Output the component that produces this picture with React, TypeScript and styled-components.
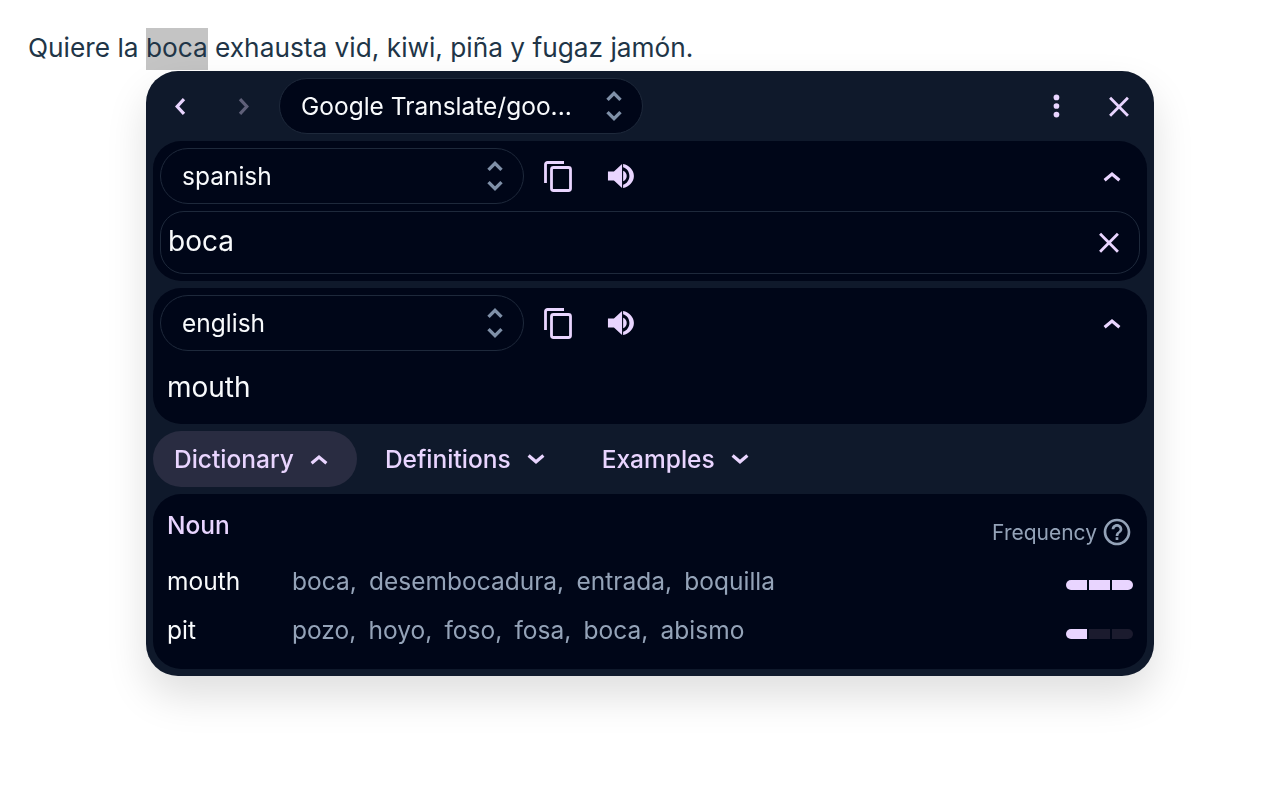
import * as React from 'react'
import { FC } from 'react'
import styled, { createGlobalStyle } from 'styled-components'

const GlobalStyle = createGlobalStyle`
    html, body {
        margin: 0;
        padding: 0;
        background: #fff;
        font-family: Inter, "Liberation Sans", sans-serif;
    }
`

const lavender = '#e9d5ff'
const muted = '#94a3b8'
const ink = '#f8fafc'
const panelBg = '#000618'

const Page = styled.div`
    position: relative;
    width: 1280px;
    height: 800px;
    overflow: hidden;
    padding: 28px 0 0 28px;
    box-sizing: border-box;
`

const Sentence = styled.p`
    margin: 0;
    font-size: 26.25px;
    line-height: 40px;
    color: #213547;

    mark {
        display: inline-block;
        padding-bottom: 2px;
        background: #c4c4c4;
        color: inherit;
    }
`

const Popup = styled.div`
    position: absolute;
    left: 146px;
    top: 71px;
    width: 1008px;
    height: 605px;
    box-sizing: border-box;
    padding: 0 7px 7px;
    background: #0f192b;
    border-radius: 32px;
    box-shadow: 0 20px 40px rgba(0, 0, 0, 0.13);
    will-change: transform;
    display: flex;
    flex-direction: column;
    gap: 7px;
`

const TopBar = styled.div`
    height: 63px;
    padding-top: 7px;
    margin-bottom: -7px;
    display: flex;
    align-items: flex-start;
`

const Spacer = styled.div`
    flex: 1;
`

const IconButton = styled.button<{ $gap?: number }>`
    width: 56px;
    height: 56px;
    flex: none;
    padding: 0;
    margin-right: ${p => p.$gap ?? 0}px;
    border: 0;
    background: transparent;
    color: ${lavender};
    display: flex;
    align-items: center;
    justify-content: center;
`

const Select = styled.div<{ $gap?: number }>`
    width: 364px;
    height: 56px;
    flex: none;
    box-sizing: border-box;
    padding: 0 16px 0 21px;
    margin-right: ${p => p.$gap ?? 0}px;
    border: 1px solid #1e293b;
    border-radius: 28px;
    background: ${panelBg};
    color: ${ink};
    font-size: 24.5px;
    display: flex;
    align-items: center;
    justify-content: space-between;
`

const SelectArrows = styled.span`
    color: #7f90a8;
    display: flex;
`

const Panel = styled.section`
    background: ${panelBg};
    border-radius: 28px;
`

const LangPanel = styled(Panel)`
    padding: 7px;
`

const LangRow = styled.div`
    display: flex;
    align-items: center;
`

const InputBox = styled.div`
    height: 63px;
    margin-top: 7px;
    box-sizing: border-box;
    padding: 0 13.5px 3px 7px;
    border: 1px solid #1e293b;
    border-radius: 24px;
    display: flex;
    align-items: center;
    justify-content: space-between;
    color: ${ink};
    font-size: 28px;
`

const OutputText = styled.div`
    height: 61px;
    padding: 5px 0 0 7px;
    display: flex;
    align-items: center;
    color: ${ink};
    font-size: 28px;
`

const ClearButton = styled.span`
    color: ${lavender};
    display: flex;
    margin-bottom: -1px;
`

const Tabs = styled.div`
    display: flex;
    height: 56px;
    gap: 7px;
`

const Tab = styled.div<{ $open?: boolean }>`
    height: 56px;
    box-sizing: border-box;
    padding: 0 23.5px 0 21px;
    border-radius: 28px;
    background: ${p => (p.$open ? '#292c41' : 'transparent')};
    color: ${lavender};
    font-size: 24.5px;
    font-weight: 500;
    display: flex;
    align-items: center;
    gap: 11.5px;
`

const DictPanel = styled(Panel)`
    flex: 1;
    padding: 0 14px;
`

const DictHead = styled.div`
    display: flex;
    justify-content: space-between;
    height: 62px;
`

const Noun = styled.div`
    color: ${lavender};
    font-size: 24.5px;
    font-weight: 500;
    line-height: 62px;
`

const FrequencyLabel = styled.div`
    display: flex;
    align-items: center;
    gap: 4px;
    height: 76px;
    color: ${muted};
    font-size: 21px;
`

const DictRow = styled.div`
    display: flex;
    align-items: center;
    height: 49px;
`

const Word = styled.div`
    width: 125px;
    color: ${ink};
    font-size: 24.5px;
`

const Translations = styled.div`
    flex: 1;
    display: flex;
    gap: 12.25px;
    color: ${muted};
    font-size: 24.5px;
`

const Meter = styled.div`
    display: flex;
    gap: 2px;
    margin-top: 8px;
`

const MeterCell = styled.div<{ $on: boolean }>`
    width: 21px;
    height: 10px;
    background: ${p => (p.$on ? lavender : '#1b1b2e')};

    &:first-child {
        border-radius: 5px 0 0 5px;
    }

    &:last-child {
        border-radius: 0 5px 5px 0;
    }
`

const chevrons = {
    up: '6.6,18.2 14,12 21.4,18.2',
    down: '6.6,10.6 14,16.8 21.4,10.6',
    left: '17,7.2 10.2,14.5 17,21.8',
    right: '11,7.2 17.8,14.5 11,21.8',
}

const Chevron: FC<{ dir: keyof typeof chevrons; color?: string }> = ({ dir, color = 'currentColor' }) => (
    <svg width="28" height="28" viewBox="0 0 28 28" fill="none" stroke={color} strokeWidth="3.2">
        <polyline points={chevrons[dir]} />
    </svg>
)

const UpDown: FC = () => (
    <SelectArrows>
        <svg width="24" height="36" viewBox="0 0 24 36" fill="none" stroke="currentColor" strokeWidth="3.4">
            <polyline points="5.5,11.9 12,5.4 18.5,11.9" />
            <polyline points="5.5,24.1 12,30.6 18.5,24.1" />
        </svg>
    </SelectArrows>
)

const Close: FC = () => (
    <svg width="34" height="34" viewBox="0 -0.5 24 24" fill="currentColor">
        <path d="M19 6.41 17.59 5 12 10.59 6.41 5 5 6.41 10.59 12 5 17.59 6.41 19 12 13.41 17.59 19 19 17.59 13.41 12z" />
    </svg>
)

const CopyIcon: FC = () => (
    <svg width="36" height="36" viewBox="0 0 36 36" fill="none" stroke="currentColor" strokeWidth="2.8">
        <path d="M5.5 25V6.5a2 2 0 0 1 2-2H24" />
        <rect x="11.5" y="9.5" width="19" height="23" rx="2" />
    </svg>
)

const SpeakerIcon: FC = () => (
    <svg width="36" height="36" viewBox="0 0 24 24" fill="currentColor">
        <path d="M3.3 9v6h4l5.4 5V4L7.3 9z" />
        <path d="M13.4 8.5v7c1.4-.4 2.4-1.9 2.4-3.5s-1-3.1-2.4-3.5z" />
        <path d="M13.4 4v2.2c2.4.6 4.2 3 4.2 5.8s-1.8 5.2-4.2 5.8V20c4-.8 7.2-4 7.2-8s-3.2-7.2-7.2-8z" />
    </svg>
)

const MoreIcon: FC = () => (
    <svg width="36" height="36" viewBox="0 0 24 24" fill="currentColor">
        <circle cx="12.3" cy="6.3" r="1.9" />
        <circle cx="12.3" cy="12" r="1.9" />
        <circle cx="12.3" cy="17.7" r="1.9" />
    </svg>
)

const HelpIcon: FC = () => (
    <svg width="32" height="32" viewBox="0 0 24 24" fill="currentColor">
        <path d="M11 18h2v-2h-2v2zm1-16C6.48 2 2 6.48 2 12s4.48 10 10 10 10-4.48 10-10S17.52 2 12 2zm0 18c-4.41 0-8-3.59-8-8s3.59-8 8-8 8 3.59 8 8-3.59 8-8 8zm0-14c-2.21 0-4 1.79-4 4h2c0-1.1.9-2 2-2s2 .9 2 2c0 2-3 1.75-3 5h2c0-2.25 3-2.5 3-5 0-2.21-1.79-4-4-4z" />
    </svg>
)

const LanguageBlock: FC<{ lang: string; children: React.ReactNode }> = ({ lang, children }) => (
    <LangPanel>
        <LangRow>
            <Select $gap={6}>
                {lang}
                <UpDown />
            </Select>
            <IconButton $gap={7}><CopyIcon /></IconButton>
            <IconButton><SpeakerIcon /></IconButton>
            <Spacer />
            <IconButton><Chevron dir="up" /></IconButton>
        </LangRow>
        {children}
    </LangPanel>
)

const rows = [
    { word: 'mouth', level: 3, translations: ['boca,', 'desembocadura,', 'entrada,', 'boquilla'] },
    { word: 'pit', level: 1, translations: ['pozo,', 'hoyo,', 'foso,', 'fosa,', 'boca,', 'abismo'] },
]

const App: FC = () => {
    return (
        <Page>
            <GlobalStyle />
            <Sentence>Quiere la <mark>boca</mark> exhausta vid, kiwi, piña y fugaz jamón.</Sentence>
            <Popup>
                <TopBar>
                    <IconButton $gap={6}><Chevron dir="left" /></IconButton>
                    <IconButton $gap={8}><Chevron dir="right" color="#5f6079" /></IconButton>
                    <Select>
                        Google Translate/goo...
                        <UpDown />
                    </Select>
                    <Spacer />
                    <IconButton $gap={7}><MoreIcon /></IconButton>
                    <IconButton><Close /></IconButton>
                </TopBar>
                <LanguageBlock lang="spanish">
                    <InputBox>
                        boca
                        <ClearButton><Close /></ClearButton>
                    </InputBox>
                </LanguageBlock>
                <LanguageBlock lang="english">
                    <OutputText>mouth</OutputText>
                </LanguageBlock>
                <Tabs>
                    <Tab $open>Dictionary<Chevron dir="up" /></Tab>
                    <Tab>Definitions<Chevron dir="down" /></Tab>
                    <Tab>Examples<Chevron dir="down" /></Tab>
                </Tabs>
                <DictPanel>
                    <DictHead>
                        <Noun>Noun</Noun>
                        <FrequencyLabel>Frequency <HelpIcon /></FrequencyLabel>
                    </DictHead>
                    {rows.map(row => (
                        <DictRow key={row.word}>
                            <Word>{row.word}</Word>
                            <Translations>
                                {row.translations.map(t => <span key={t}>{t}</span>)}
                            </Translations>
                            <Meter>
                                {[1, 2, 3].map(i => <MeterCell key={i} $on={i <= row.level} />)}
                            </Meter>
                        </DictRow>
                    ))}
                </DictPanel>
            </Popup>
        </Page>
    )
}

export default App
